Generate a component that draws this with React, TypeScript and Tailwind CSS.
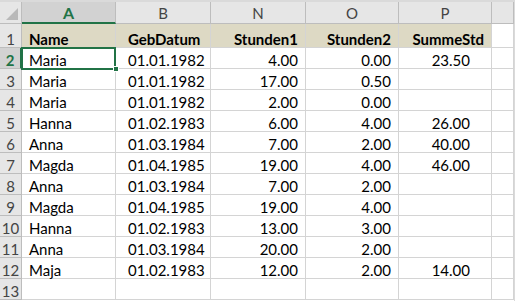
import React from "react";

type Row = [string, string, string, string, string];

const rows: Row[] = [
  ["Maria", "01.01.1982", "4.00", "0.00", "23.50"],
  ["Maria", "01.01.1982", "17.00", "0.50", ""],
  ["Maria", "01.01.1982", "2.00", "0.00", ""],
  ["Hanna", "01.02.1983", "6.00", "4.00", "26.00"],
  ["Anna", "01.03.1984", "7.00", "2.00", "40.00"],
  ["Magda", "01.04.1985", "19.00", "4.00", "46.00"],
  ["Anna", "01.03.1984", "7.00", "2.00", ""],
  ["Magda", "01.04.1985", "19.00", "4.00", ""],
  ["Hanna", "01.02.1983", "13.00", "3.00", ""],
  ["Anna", "01.03.1984", "20.00", "2.00", ""],
  ["Maja", "01.02.1983", "12.00", "2.00", "14.00"],
];

const colLetters = ["A", "B", "N", "O", "P", ""];

// Excel richtet standardmäßig unten aus
const cell = "border-r border-b border-[#d4d4d4] flex items-end leading-[15px] overflow-hidden whitespace-nowrap";
const head = "border-r border-b border-[#bdbdbd] bg-[#e6e6e6] flex items-center justify-center text-[#444]";
const rowHead = "border-r border-b border-[#bdbdbd] bg-[#e6e6e6] flex items-end leading-[15px] justify-center text-[#444]";

export default function App() {
  return (
    <div
      className="w-[515px] h-[301px] bg-white overflow-hidden border-t-2 border-r border-[#dadada]"
      style={{ fontFamily: "Lato, 'Liberation Sans', sans-serif" }}
    >
      <div className="grid grid-cols-[22px_94px_95px_95px_93px_93px_1fr] grid-rows-[22px_24px_repeat(12,21px)] text-[15px] text-black">
        {/* Eckfeld */}
        <div className={head + " relative"}>
          <svg className="absolute right-[3px] bottom-[3px]" width="12" height="12" viewBox="0 0 12 12">
            <polygon points="12,0 12,12 0,12" fill="#b9b9b9" />
          </svg>
        </div>
        {colLetters.map((l, i) =>
          i === 0 ? (
            <div key={i} className="border-r border-[#bdbdbd] border-b-2 border-b-[#217346] bg-[#d2d2d2] flex items-center justify-center pt-[2px] text-[#217346] font-bold text-[16px]">
              {l}
            </div>
          ) : (
            <div key={i} className={head + " pt-[2px] text-[15px]"}>
              {l}
            </div>
          )
        )}

        {/* Zeile 1 */}
        <div className={rowHead}>1</div>
        <div className={cell + " bg-[#ddd9c4] font-bold pl-[7px]"}>Name</div>
        <div className={cell + " bg-[#ddd9c4] font-bold pl-[12px]"}>GebDatum</div>
        <div className={cell + " bg-[#ddd9c4] font-bold justify-end pr-[7px]"}>Stunden1</div>
        <div className={cell + " bg-[#ddd9c4] font-bold justify-end pr-[7px]"}>Stunden2</div>
        <div className={cell + " bg-[#ddd9c4] font-bold justify-end pr-[7px]"}>SummeStd</div>
        <div className={cell}></div>

        {rows.map((r, i) => {
          const n = i + 2;
          const sel = n === 2;
          return (
            <React.Fragment key={n}>
              {sel ? (
                <div className="border-r-2 border-r-[#217346] border-b border-[#bdbdbd] bg-[#d2d2d2] flex items-end leading-[15px] justify-center text-[#217346] font-bold">
                  {n}
                </div>
              ) : (
                <div className={rowHead}>{n}</div>
              )}
              <div className={cell + " pl-[7px] relative overflow-visible"}>
                {r[0]}
                {sel && (
                  <>
                    <div className="absolute -left-[1px] -top-[1px] w-[95px] h-[23px] border-2 border-[#217346] pointer-events-none" />
                    <div className="absolute right-[-4px] bottom-[-4px] w-[6px] h-[6px] bg-[#217346] border border-white z-10" />
                  </>
                )}
              </div>
              <div className={cell + " pl-[12px]"}>{r[1]}</div>
              <div className={cell + " justify-end pr-[7px]"}>{r[2]}</div>
              <div className={cell + " justify-end pr-[7px]"}>{r[3]}</div>
              <div className={cell + " justify-end pr-[21px]"}>{r[4]}</div>
              <div className={cell}></div>
            </React.Fragment>
          );
        })}

        {/* Zeile 13 */}
        <div className={rowHead}>13</div>
        <div className={cell}></div>
        <div className={cell}></div>
        <div className={cell}></div>
        <div className={cell}></div>
        <div className={cell}></div>
        <div className={cell}></div>
      </div>
    </div>
  );
}
